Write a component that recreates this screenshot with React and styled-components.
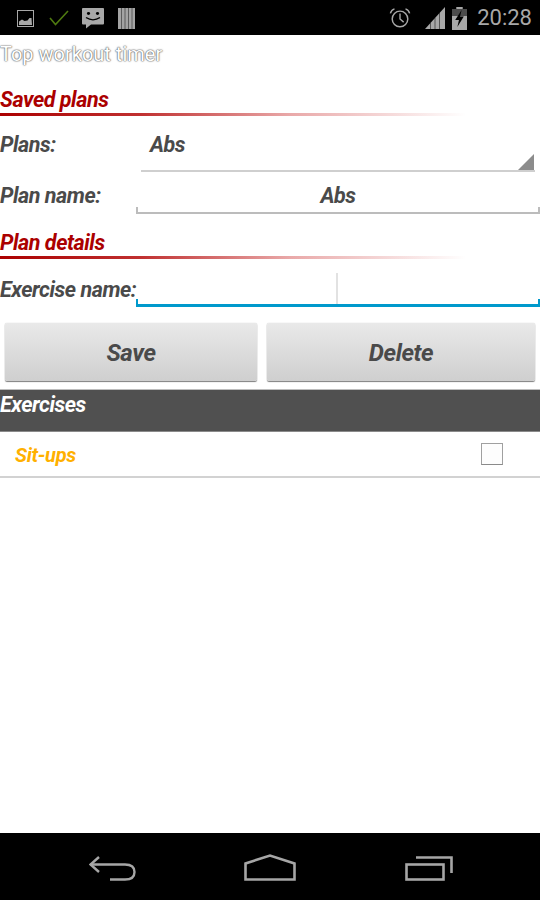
import React from "react";
import styled, { createGlobalStyle } from "styled-components";

const GlobalStyle = createGlobalStyle`
  html, body {
    margin: 0;
    padding: 0;
    background: #ffffff;
    font-family: Roboto, "Liberation Sans", sans-serif;
  }
`;

const Screen = styled.div`
  width: 540px;
  height: 900px;
  display: flex;
  flex-direction: column;
  overflow: hidden;
  background: #ffffff;
`;

const StatusBar = styled.div`
  height: 35px;
  flex: none;
  box-sizing: border-box;
  background: #000000;
  display: flex;
  align-items: center;
  justify-content: space-between;
  padding: 1px 8px 0 17px;
`;

const StatusGroup = styled.div`
  display: flex;
  align-items: center;
`;

const IconSlot = styled.span`
  display: flex;
  margin-left: ${(p) => p.$left || 0}px;
`;

const Clock = styled.span`
  font-size: 22px;
  color: #a8a8a8;
  line-height: 34px;
  margin-left: 10px;
`;

const Content = styled.div`
  flex: 1;
  display: flex;
  flex-direction: column;
`;

const AppTitle = styled.div`
  height: 37px;
  flex: none;
  line-height: 38px;
  font-size: 20px;
  color: #ffffff;
  text-shadow: 0 0 2px #666666, 0 0 1px #666666, 0 0 1px #888888;
`;

const SectionHead = styled.div`
  flex: none;
  height: ${(p) => p.$height}px;
  display: flex;
  flex-direction: column;
  justify-content: flex-end;
`;

const SectionTitle = styled.div`
  font-size: 21.5px;
  letter-spacing: -0.45px;
  line-height: 24px;
  font-weight: 700;
  font-style: italic;
  color: #ab0000;
  margin-bottom: 1px;
`;

const SectionRule = styled.div`
  height: 3px;
  width: 466px;
  background: linear-gradient(to right, #ab0000 0%, #c03030 30%, #e9a8a8 62%, #ffffff 100%);
`;

const FormRow = styled.div`
  flex: none;
  height: ${(p) => p.$height}px;
  display: flex;
`;

const FieldLabel = styled.div`
  width: 136px;
  flex: none;
  font-size: 21.5px;
  letter-spacing: -0.45px;
  font-weight: 700;
  font-style: italic;
  color: #4a4a4a;
  line-height: ${(p) => p.$line}px;
  white-space: nowrap;
`;

const Spinner = styled.div`
  flex: 1;
  margin: 0 5px;
  height: 56px;
  padding-left: 9px;
  line-height: 58px;
  font-size: 21.5px;
  letter-spacing: -0.45px;
  font-weight: 700;
  font-style: italic;
  color: #4a4a4a;
  border-bottom: 2px solid #cfcfcf;
  box-sizing: border-box;
  position: relative;
`;

const SpinnerCorner = styled.div`
  position: absolute;
  right: 1px;
  bottom: 0;
  width: 0;
  height: 0;
  border-style: solid;
  border-width: 0 0 16px 16px;
  border-color: transparent transparent #8c8c8c transparent;
`;

const TextField = styled.div`
  flex: 1;
  height: ${(p) => p.$height}px;
  box-sizing: border-box;
  border-bottom: ${(p) => (p.$focused ? "3px solid #0099cc" : "2px solid #bcbcbc")};
  position: relative;
  text-align: center;
  font-size: 21.5px;
  letter-spacing: -0.45px;
  font-weight: 700;
  font-style: italic;
  color: #4a4a4a;
  line-height: 48px;
  &::before, &::after {
    content: "";
    position: absolute;
    bottom: 0;
    width: 2px;
    height: 5px;
    background: ${(p) => (p.$focused ? "#0099cc" : "#bcbcbc")};
  }
  &::before { left: 0; }
  &::after { right: 0; }
`;

const Cursor = styled.div`
  position: absolute;
  left: 200px;
  top: 14px;
  width: 2px;
  height: 31px;
  background: #e2e2e2;
`;

const ButtonRow = styled.div`
  flex: none;
  display: flex;
  gap: 10px;
  padding: 16px 5px 8px;
`;

const ActionButton = styled.button`
  flex: ${(p) => p.$grow};
  height: 58px;
  border: 0;
  border-radius: 2px;
  padding: 2px 0 0;
  background: linear-gradient(to bottom, #e9e9e9, #cfcfcf);
  box-shadow: 0 1px 1px #7f7f7f, 0 0 1px #b5b5b5;
  font-family: inherit;
  font-size: 24px;
  letter-spacing: -0.4px;
  font-weight: 700;
  font-style: italic;
  color: #4a4a4a;
`;

const ListHeader = styled.div`
  flex: none;
  height: 43px;
  box-sizing: border-box;
  background: #505050;
  border-top: 1px solid #bdbdbd;
  border-bottom: 1px solid #8a8a8a;
  font-size: 21.5px;
  letter-spacing: -0.45px;
  font-weight: 700;
  font-style: italic;
  color: #ffffff;
  line-height: 30px;
`;

const ListRow = styled.div`
  flex: none;
  height: 46px;
  box-sizing: border-box;
  border-bottom: 2px solid #d2d2d2;
  display: flex;
  align-items: center;
  justify-content: space-between;
  padding: 0 37px 0 15px;
`;

const ExerciseName = styled.span`
  font-size: 20px;
  letter-spacing: -0.3px;
  font-weight: 700;
  font-style: italic;
  color: #ffb000;
  padding-top: 2px;
`;

const CheckBox = styled.div`
  width: 22px;
  height: 22px;
  box-sizing: border-box;
  border: 1px solid #a0a0a0;
  border-bottom-color: #8a8a8a;
  background: #fdfdfd;
`;

const NavBar = styled.div`
  height: 67px;
  flex: none;
  background: #000000;
  display: flex;
  align-items: flex-end;
  justify-content: space-between;
  padding: 0 87px 19px 89px;
  box-sizing: border-box;
`;

const ImageIcon = () => (
  <svg width="17" height="17" viewBox="0 0 17 17">
    <rect x="0.5" y="0.5" width="16" height="16" fill="none" stroke="#a8a8a8" />
    <path d="M2 15V11.5L5 9.5L7.5 11L10.5 10.5L12.5 8L14.5 8L15 15Z" fill="#a8a8a8" />
  </svg>
);

const CheckIcon = () => (
  <svg width="20" height="16" viewBox="0 0 20 16">
    <path d="M1 8L6.5 14.5L19 1" fill="none" stroke="#4f7a10" strokeWidth="1.6" />
  </svg>
);

const ChatIcon = () => (
  <svg width="24" height="22" viewBox="0 0 24 24" preserveAspectRatio="none">
    <path
      d="M2 1H22Q23 1 23 2V18Q23 19 22 19H10L5 23.5V19H2Q1 19 1 18V2Q1 1 2 1Z"
      fill="#a8a8a8"
    />
    <circle cx="7.5" cy="7" r="1.6" fill="#000" />
    <circle cx="16.5" cy="7" r="1.6" fill="#000" />
    <path d="M5 11.5Q12 16.5 19 11.5" fill="none" stroke="#000" strokeWidth="1.4" />
  </svg>
);

const BarcodeIcon = () => (
  <svg width="17" height="21" viewBox="0 0 17 21">
    <rect width="17" height="21" fill="#a4a4a4" />
    <path d="M3.5 0V21M7 0V21M10.5 0V21M14 0V21" stroke="#4a4a4a" strokeWidth="0.8" />
  </svg>
);

const AlarmIcon = () => (
  <svg width="22" height="22" viewBox="0 0 24 24" fill="none" stroke="#a8a8a8">
    <circle cx="12" cy="13" r="8.5" strokeWidth="1.6" />
    <path d="M12 7V13L16 16.5" strokeWidth="1.5" />
    <path d="M1.5 7Q2.5 3 6 2M22.5 7Q21.5 3 18 2" strokeWidth="1.6" />
  </svg>
);

const SignalIcon = () => (
  <svg width="20" height="22" viewBox="0 0 20 22">
    <path d="M0 22L20 0V22Z" fill="#a8a8a8" />
    <path d="M5.5 16V22M10 11V22M14.5 6V22" stroke="#000" strokeWidth="0.7" opacity="0.7" />
  </svg>
);

const BatteryIcon = () => (
  <svg width="15" height="23" viewBox="0 0 14 23" preserveAspectRatio="none">
    <path d="M4 0H10V2H14V23H0V2H4Z" fill="#a8a8a8" />
    <path d="M0 2H14V9H0Z" fill="#4c4c4c" />
    <path d="M9 3L3 13H6.5L5 20L11 9.5H7.5Z" fill="#000" />
  </svg>
);

const BackIcon = () => (
  <svg width="48" height="25" viewBox="0 0 48 25" fill="none" stroke="#a6a6a6" strokeWidth="2.4">
    <path d="M10 1L1.5 8.5L10 16" />
    <path d="M1.5 8.5H36Q45.5 8.5 45.5 16Q45.5 23.5 36 23.5H21" />
  </svg>
);

const HomeIcon = () => (
  <svg width="54" height="27" viewBox="0 0 54 27" fill="none" stroke="#a6a6a6" strokeWidth="2.6">
    <path d="M1.5 25.5V9.5L26 1.5L50.5 9.5V25.5Z" />
  </svg>
);

const RecentsIcon = () => (
  <svg width="48" height="25" viewBox="0 0 48 25" fill="none" stroke="#a6a6a6" strokeWidth="2.6">
    <rect x="1.5" y="8.5" width="37" height="15" />
    <path d="M11 1.5H46.5V17" />
  </svg>
);

const App = () => (
  <Screen>
    <GlobalStyle />
    <StatusBar>
      <StatusGroup>
        <IconSlot>
          <ImageIcon />
        </IconSlot>
        <IconSlot $left={15}>
          <CheckIcon />
        </IconSlot>
        <IconSlot $left={12}>
          <ChatIcon />
        </IconSlot>
        <IconSlot $left={13}>
          <BarcodeIcon />
        </IconSlot>
      </StatusGroup>
      <StatusGroup>
        <IconSlot>
          <AlarmIcon />
        </IconSlot>
        <IconSlot $left={14}>
          <SignalIcon />
        </IconSlot>
        <IconSlot $left={7}>
          <BatteryIcon />
        </IconSlot>
        <Clock>20:28</Clock>
      </StatusGroup>
    </StatusBar>
    <Content>
      <AppTitle>Top workout timer</AppTitle>
      <SectionHead $height={44}>
        <SectionTitle>Saved plans</SectionTitle>
        <SectionRule />
      </SectionHead>
      <FormRow $height={56}>
        <FieldLabel $line={58}>Plans:</FieldLabel>
        <Spinner>
          Abs
          <SpinnerCorner />
        </Spinner>
      </FormRow>
      <FormRow $height={42}>
        <FieldLabel $line={48}>Plan name:</FieldLabel>
        <TextField $height={42}>Abs</TextField>
      </FormRow>
      <SectionHead $height={45}>
        <SectionTitle>Plan details</SectionTitle>
        <SectionRule />
      </SectionHead>
      <FormRow $height={48}>
        <FieldLabel $line={62}>Exercise name:</FieldLabel>
        <TextField $height={48} $focused>
          <Cursor />
        </TextField>
      </FormRow>
      <ButtonRow>
        <ActionButton $grow="252">Save</ActionButton>
        <ActionButton $grow="268">Delete</ActionButton>
      </ButtonRow>
      <ListHeader>Exercises</ListHeader>
      <ListRow>
        <ExerciseName>Sit-ups</ExerciseName>
        <CheckBox />
      </ListRow>
    </Content>
    <NavBar>
      <BackIcon />
      <HomeIcon />
      <RecentsIcon />
    </NavBar>
  </Screen>
);

export default App;
